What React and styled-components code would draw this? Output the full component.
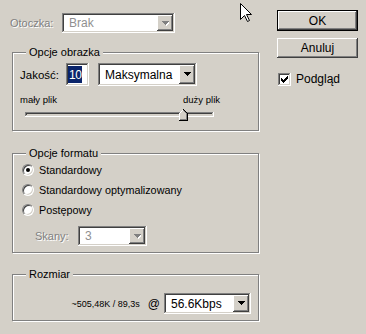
import React from "react";
import styled, { createGlobalStyle } from "styled-components";

const GlobalStyle = createGlobalStyle`
  * { box-sizing: border-box; }
  html, body {
    margin: 0;
    padding: 0;
    background: #d4d0c8;
  }
  body {
    font-family: "Liberation Sans", Arial, sans-serif;
    font-size: 11px;
    color: #000000;
  }
`;

const sunken =
  "inset -1px -1px #ffffff, inset 1px 1px #808080, inset -2px -2px #d4d0c8, inset 2px 2px #404040";
const raised =
  "inset -1px -1px #404040, inset 1px 1px #ffffff, inset -2px -2px #808080, inset 2px 2px #d4d0c8";

const Dialog = styled.div`
  position: relative;
  width: 366px;
  height: 334px;
  display: flex;
  background: #d4d0c8;
  overflow: hidden;
`;

const LeftColumn = styled.div`
  width: 260px;
  padding: 13px 0 0 10px;
  display: flex;
  flex-direction: column;
`;

const RightColumn = styled.div`
  width: 82px;
  margin-left: 17px;
  padding-top: 10px;
  display: flex;
  flex-direction: column;
`;

const Row = styled.div`
  display: flex;
  align-items: center;
  height: ${(p) => p.$h || 20}px;
  margin-top: ${(p) => p.$mt || 0}px;
  margin-left: ${(p) => p.$ml || 0}px;
  justify-content: ${(p) => p.$justify || "flex-start"};
`;

const Label = styled.span`
  width: ${(p) => (p.$w ? `${p.$w}px` : "auto")};
  flex: none;
  white-space: nowrap;
  font-size: ${(p) => p.$size || 11}px;
  color: ${(p) => (p.$disabled ? "#808080" : "#000000")};
  text-shadow: ${(p) => (p.$disabled ? "1px 1px 0 #ffffff" : "none")};
`;

const AtSign = styled.span`
  margin: 0 4px 0 8px;
  font-size: 12px;
`;

const Group = styled.div`
  position: relative;
  margin: ${(p) => p.$mt}px 0 0 2px;
  width: 247px;
  height: ${(p) => p.$h}px;
  border: 1px solid #808080;
  box-shadow: inset 1px 1px #ffffff, 1px 1px #ffffff;
  padding: ${(p) => p.$pad};
`;

const Legend = styled.span`
  position: absolute;
  top: -7px;
  left: 13px;
  padding: 0 3px;
  background: #d4d0c8;
  line-height: 13px;
  font-size: 11px;
`;

const ComboBox = styled.div`
  display: flex;
  width: ${(p) => p.$w}px;
  height: ${(p) => p.$h}px;
  padding: 2px;
  flex: none;
  background: #ffffff;
  box-shadow: ${sunken};
`;

const ComboText = styled.div`
  flex: 1;
  display: flex;
  align-items: center;
  padding-left: 5px;
  font-size: ${(p) => p.$size || 12}px;
  color: ${(p) => (p.$disabled ? "#909090" : "#000000")};
`;

const DropButton = styled.div`
  width: 16px;
  flex: none;
  display: flex;
  align-items: center;
  justify-content: center;
  background: #d4d0c8;
  box-shadow: ${raised};
`;

const NumberField = styled.div`
  width: 23px;
  height: 23px;
  padding: 3px 2px 3px 2px;
  flex: none;
  background: #ffffff;
  box-shadow: ${sunken};
  display: flex;
  align-items: stretch;
`;

const Selected = styled.span`
  display: flex;
  align-items: center;
  padding: 0 1px;
  background: #0a246a;
  color: #ffffff;
  font-size: 12px;
  letter-spacing: -0.5px;
`;

const SizeLabels = styled.div`
  display: flex;
  justify-content: space-between;
  width: 200px;
  height: 11px;
  margin-top: 8px;
  line-height: 11px;
  font-size: 9.5px;
`;

const SliderRow = styled.div`
  position: relative;
  width: 189px;
  height: 13px;
  margin: 3px 0 0 5px;
  padding-top: 4px;
`;

const Track = styled.div`
  height: 5px;
  background: #d4d0c8;
  box-shadow: ${sunken};
`;

const Thumb = styled.svg`
  position: absolute;
  left: 154px;
  top: 1px;
`;

const RadioRow = styled.div`
  display: flex;
  align-items: center;
  gap: 5px;
  height: 20px;
`;

const RadioCircle = styled.span`
  width: 12px;
  height: 12px;
  flex: none;
  border-radius: 50%;
  background: #ffffff;
  border: 1px solid;
  border-color: #808080 #ffffff #ffffff #808080;
  box-shadow: inset 1px 1px #404040, inset -1px -1px #d4d0c8;
  display: flex;
  align-items: center;
  justify-content: center;
  &::after {
    content: "";
    width: 4px;
    height: 4px;
    border-radius: 50%;
    background: ${(p) => (p.$checked ? "#000000" : "transparent")};
  }
`;

const Button = styled.div`
  width: 81px;
  height: ${(p) => p.$h}px;
  margin-top: ${(p) => p.$mt || 0}px;
  display: flex;
  align-items: center;
  justify-content: center;
  background: #d4d0c8;
  font-size: 12px;
  border: ${(p) => (p.$default ? "1px solid #000000" : "none")};
  box-shadow: ${raised};
`;

const CheckRow = styled.div`
  display: flex;
  align-items: center;
  gap: 5px;
  margin-top: 14px;
  margin-left: 1px;
`;

const CheckBox = styled.span`
  width: 13px;
  height: 13px;
  flex: none;
  background: #ffffff;
  box-shadow: ${sunken};
  display: flex;
  align-items: center;
  justify-content: center;
`;

const Cursor = styled.svg`
  position: absolute;
  left: 240px;
  top: 3px;
`;

const Arrow = ({ disabled }) => (
  <svg width="7" height="5" viewBox="0 0 7 5" shapeRendering="crispEdges">
    {disabled && (
      <path d="M1 1h7v1H1zM2 2h5v1H2zM3 3h3v1H3zM4 4h1v1H4z" fill="#ffffff" />
    )}
    <path
      d="M0 0h7v1H0zM1 1h5v1H1zM2 2h3v1H2zM3 3h1v1H3z"
      fill={disabled ? "#808080" : "#000000"}
    />
  </svg>
);

function Combo({ w, h, value, disabled, size }) {
  return (
    <ComboBox $w={w} $h={h}>
      <ComboText $disabled={disabled} $size={size}>
        {value}
      </ComboText>
      <DropButton>
        <Arrow disabled={disabled} />
      </DropButton>
    </ComboBox>
  );
}

function Radio({ checked, children }) {
  return (
    <RadioRow>
      <RadioCircle $checked={checked} />
      <Label $size={10.8}>{children}</Label>
    </RadioRow>
  );
}

export default function App() {
  return (
    <Dialog>
      <GlobalStyle />
      <LeftColumn>
        <Row $h={20}>
          <Label $w={52} $disabled>
            Otoczka:
          </Label>
          <Combo w={113} h={20} value="Brak" disabled />
        </Row>

        <Group $mt={19} $h={79} $pad="10px 0 0 7px">
          <Legend>Opcje obrazka</Legend>
          <Row $h={23}>
            <Label $w={46} $size={11.5}>
              Jakość:
            </Label>
            <NumberField>
              <Selected>10</Selected>
            </NumberField>
            <Row $ml={9} $h={23}>
              <Combo w={99} h={23} value="Maksymalna" />
            </Row>
          </Row>
          <SizeLabels>
            <span>mały plik</span>
            <span>duży plik</span>
          </SizeLabels>
          <SliderRow>
            <Track />
            <Thumb width="9" height="12" viewBox="0 0 9 12" shapeRendering="crispEdges">
              <path d="M4 0L8 4V11H0V4Z" fill="#d4d0c8" />
              <path d="M0.5 11V4.5L4.5 0.5" stroke="#ffffff" fill="none" />
              <path d="M4.5 0.5L8.5 4.5V11.5H0" stroke="#000000" fill="none" />
              <path d="M4.5 1.5L7.5 4.5V10.5H1" stroke="#808080" fill="none" />
            </Thumb>
          </SliderRow>
        </Group>

        <Group $mt={22} $h={100} $pad="6px 0 0 9px">
          <Legend>Opcje formatu</Legend>
          <Radio checked>Standardowy</Radio>
          <Radio>Standardowy optymalizowany</Radio>
          <Radio>Postępowy</Radio>
          <Row $mt={6} $ml={13} $h={20}>
            <Label $w={43} $disabled>
              Skany:
            </Label>
            <Combo w={69} h={20} value="3" disabled />
          </Row>
        </Group>

        <Group $mt={21} $h={47} $pad="18px 7px 0 0">
          <Legend>Rozmiar</Legend>
          <Row $h={21} $justify="flex-end">
            <Label $size={9}>~505,48K / 89,3s</Label>
            <AtSign>@</AtSign>
            <Combo w={87} h={21} value="56.6Kbps" />
          </Row>
        </Group>
      </LeftColumn>

      <RightColumn>
        <Button $h={21} $default>
          OK
        </Button>
        <Button $h={20} $mt={7}>
          Anuluj
        </Button>
        <CheckRow>
          <CheckBox>
            <svg width="7" height="7" viewBox="0 0 7 7" shapeRendering="crispEdges">
              <path
                d="M6 0h1v3H6zM5 1h1v3H5zM0 2h1v3H0zM4 2h1v3H4zM1 3h1v3H1zM3 3h1v3H3zM2 4h1v3H2z"
                fill="#000000"
              />
            </svg>
          </CheckBox>
          <Label $size={12}>Podgląd</Label>
        </CheckRow>
      </RightColumn>

      <Cursor width="13" height="20" viewBox="0 0 13 20">
        <path
          d="M0.5 0.5V16.5L4.5 12.5L7.5 18.5L9.5 17.5L6.5 11.5H11.5Z"
          fill="#ffffff"
          stroke="#000000"
        />
      </Cursor>
    </Dialog>
  );
}
